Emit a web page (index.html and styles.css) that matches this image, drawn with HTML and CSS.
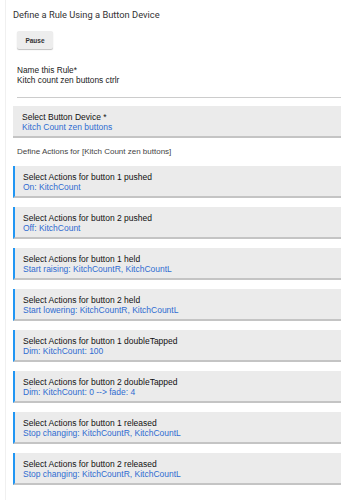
FILE: index.html
```html
<!DOCTYPE html>
<html lang="en">
<head>
    <meta charset="UTF-8">
    <meta name="viewport" content="width=device-width, initial-scale=1.0">
    <title>Define a Rule Using a Button Device</title>
    <link rel="stylesheet" href="styles.css">
</head>
<body>
    <div class="page">
        <h1 class="page-title">Define a Rule Using a Button Device</h1>
        <button class="pause-btn">Pause</button>

        <div class="name-field">
            <label>Name this Rule*</label>
            <div class="name-value">Kitch count zen buttons ctrlr</div>
        </div>

        <div class="device-box">
            <div class="box-title">Select Button Device *</div>
            <div class="box-value">Kitch Count zen buttons</div>
        </div>

        <div class="section-label">Define Actions for [Kitch Count zen buttons]</div>

        <div class="action-list">
            <div class="action-card">
                <div class="box-title">Select Actions for button 1 pushed</div>
                <div class="box-value">On: KitchCount</div>
            </div>
            <div class="action-card">
                <div class="box-title">Select Actions for button 2 pushed</div>
                <div class="box-value">Off: KitchCount</div>
            </div>
            <div class="action-card">
                <div class="box-title">Select Actions for button 1 held</div>
                <div class="box-value">Start raising: KitchCountR, KitchCountL</div>
            </div>
            <div class="action-card">
                <div class="box-title">Select Actions for button 2 held</div>
                <div class="box-value">Start lowering: KitchCountR, KitchCountL</div>
            </div>
            <div class="action-card">
                <div class="box-title">Select Actions for button 1 doubleTapped</div>
                <div class="box-value">Dim: KitchCount: 100</div>
            </div>
            <div class="action-card">
                <div class="box-title">Select Actions for button 2 doubleTapped</div>
                <div class="box-value">Dim: KitchCount: 0 --&gt; fade: 4</div>
            </div>
            <div class="action-card">
                <div class="box-title">Select Actions for button 1 released</div>
                <div class="box-value">Stop changing: KitchCountR, KitchCountL</div>
            </div>
            <div class="action-card">
                <div class="box-title">Select Actions for button 2 released</div>
                <div class="box-value">Stop changing: KitchCountR, KitchCountL</div>
            </div>
        </div>
    </div>
</body>
</html>
```

FILE: styles.css
```css
* {
    margin: 0;
    padding: 0;
    box-sizing: border-box;
}
body {
    font-family: "Liberation Sans", Arial, sans-serif;
    background-color: #fff;
    color: #222;
}
.page {
    margin-left: 5px;
    border-left: 1px solid #f0f0f0;
    padding: 8px 0 0 7px;
    min-height: 500px;
}
.page-title {
    font-family: Roboto, sans-serif;
    font-size: 9.3px;
    font-weight: 400;
    color: #333;
    line-height: 13px;
}
.pause-btn {
    display: block;
    margin: 10px 0 0 4px;
    width: 36px;
    height: 18px;
    border: none;
    border-radius: 2px;
    background-color: #ededed;
    box-shadow: 0 1px 1px rgba(0, 0, 0, 0.25);
    font-family: "Liberation Sans", sans-serif;
    font-size: 6.5px;
    font-weight: bold;
    color: #333;
}
.name-field {
    margin: 16px 0 0 4px;
    border-bottom: 1px solid #ccc;
    padding-bottom: 12px;
    font-size: 8.3px;
    line-height: 10px;
    color: #222;
}
.device-box,
.action-card {
    background-color: #ebebeb;
    border-bottom: 2px solid #c4c4c4;
    height: 32px;
    padding: 6px 0 0 9px;
    font-size: 8.5px;
    line-height: 10px;
}
.device-box {
    margin-top: 8px;
}
.box-title {
    color: #111;
}
.box-value {
    color: #2f6bd1;
}
.section-label {
    margin: 9px 0 0 4px;
    font-size: 8px;
    line-height: 10px;
    color: #444;
}
.action-list {
    display: flex;
    flex-direction: column;
    gap: 9px;
    margin-top: 9px;
}
.action-card {
    border-left: 2px solid #2196f3;
    padding-left: 8px;
}
```
